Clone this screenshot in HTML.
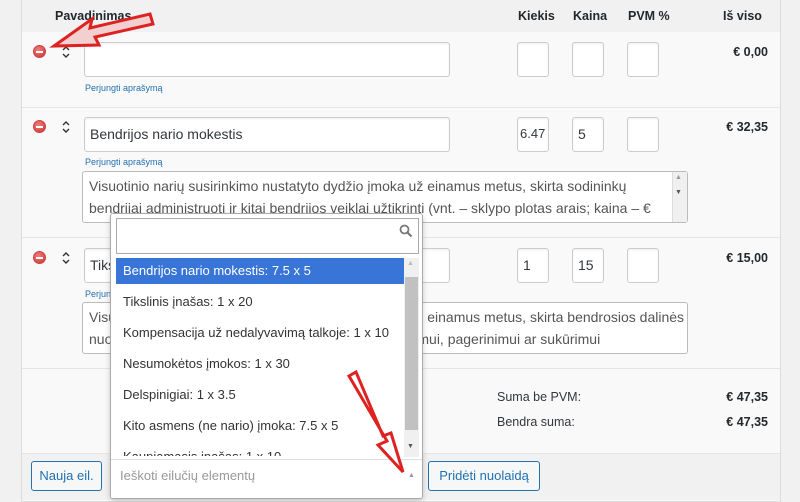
<!DOCTYPE html>
<html><head><meta charset="utf-8"><style>
*{box-sizing:border-box}
body{margin:0;width:800px;height:500px;overflow:hidden;background:#f1f1f1;font-family:"Liberation Sans",sans-serif;font-size:13px;color:#32373c;position:relative}
.a{position:absolute}
.panel{left:21px;top:-2px;width:760px;height:504px;background:#f9f9f9;border:1px solid #dcdcdc}
.hd{font-weight:bold;font-size:12.5px;color:#23282d}
.in{position:absolute;background:#fff;border:1px solid #ccc;border-radius:3px;box-shadow:inset 0 1px 2px rgba(0,0,0,.07);font-size:14px;padding:8px 5px;color:#32373c}
.lk{position:absolute;font-size:9px;color:#2271b1}
.tot{position:absolute;font-weight:bold;font-size:12.5px;right:32px;color:#23282d}
.min{position:absolute;width:13px;height:13px;border-radius:50%;background:radial-gradient(circle at 40% 35%,#f08080,#c9302c);border:1px solid #c44}
.min:after{content:"";position:absolute;left:2px;top:4.5px;width:7px;height:2px;background:#fff}
.ta{position:absolute;background:#fff;border:1px solid #bbb;border-radius:3px;font-size:14px;line-height:22px;padding:3px 6px;color:#555;white-space:nowrap;overflow:hidden}
.btn{position:absolute;border:1px solid #2271b1;border-radius:3px;background:#f6f7f7;color:#2271b1;font-size:13px;text-align:center;line-height:28px}
.dd{left:110px;top:213px;width:313px;height:286px;background:#fff;border:1px solid #aaa;border-radius:3px;box-shadow:0 2px 6px rgba(0,0,0,.2);overflow:hidden}
.it{position:absolute;left:5px;width:288px;height:26px;line-height:26px;padding-left:7px;font-size:13px;color:#333}
</style></head><body>
<div class="a panel"></div>
<div class="a" style="left:22px;top:0;width:758px;height:32px;background:#f1f1f1"></div>
<div class="a hd" style="left:55px;top:9px">Pavadinimas</div>
<div class="a hd" style="left:518px;top:9px">Kiekis</div>
<div class="a hd" style="left:573px;top:9px">Kaina</div>
<div class="a hd" style="left:628px;top:9px">PVM %</div>
<div class="a hd" style="left:723px;top:9px">Iš viso</div>

<svg class="a" style="left:0;top:0" width="80" height="300">
<g fill="none" stroke="#333" stroke-width="1.4">
<path d="M63,50 L66,47 L69,50 M63,54 L66,57 L69,54"/>
<path d="M63,125 L66,122 L69,125 M63,129 L66,132 L69,129"/>
<path d="M63,256 L66,253 L69,256 M63,260 L66,263 L69,260"/>
</g></svg>

<!-- row1 -->
<div class="min" style="left:33px;top:45px"></div>
<div class="in" style="left:84px;top:42px;width:366px;height:35px"></div>
<div class="lk" style="left:85px;top:83px">Perjungti aprašymą</div>
<div class="in" style="left:517px;top:42px;width:32px;height:35px"></div>
<div class="in" style="left:572px;top:42px;width:32px;height:35px"></div>
<div class="in" style="left:627px;top:42px;width:32px;height:35px"></div>
<div class="tot" style="top:45px">€ 0,00</div>
<div class="a" style="left:22px;top:107px;width:758px;height:1px;background:#e5e5e5"></div>

<!-- row2 -->
<div class="min" style="left:33px;top:120px"></div>
<div class="in" style="left:84px;top:117px;width:366px;height:35px">Bendrijos nario mokestis</div>
<div class="lk" style="left:85px;top:157px">Perjungti aprašymą</div>
<div class="in" style="left:517px;top:117px;width:32px;height:35px;font-size:13px;padding:8px 2px">6.47</div>
<div class="in" style="left:572px;top:117px;width:32px;height:35px">5</div>
<div class="in" style="left:627px;top:117px;width:32px;height:35px"></div>
<div class="tot" style="top:120px">€ 32,35</div>
<div class="ta" style="left:82px;top:171px;width:606px;height:52px">Visuotinio narių susirinkimo nustatyto dydžio įmoka už einamus metus, skirta sodininkų<br>bendrijai administruoti ir kitai bendrijos veiklai užtikrinti (vnt. – sklypo plotas arais; kaina – €</div>
<div class="a" style="left:672px;top:172px;width:15px;height:50px;background:#f0f0f0;border-left:1px solid #ddd"></div>
<div class="a" style="left:675px;top:174px;font-size:7px;color:#999">▲</div>
<div class="a" style="left:675px;top:189px;font-size:7px;color:#555">▼</div>
<div class="a" style="left:22px;top:237px;width:758px;height:1px;background:#e5e5e5"></div>

<!-- row3 -->
<div class="min" style="left:33px;top:251px"></div>
<div class="in" style="left:84px;top:248px;width:366px;height:35px">Tikslinis</div>
<div class="lk" style="left:85px;top:289px">Perjungti</div>
<div class="in" style="left:517px;top:248px;width:32px;height:35px">1</div>
<div class="in" style="left:572px;top:248px;width:32px;height:35px">15</div>
<div class="in" style="left:627px;top:248px;width:32px;height:35px"></div>
<div class="tot" style="top:251px">€ 15,00</div>
<div class="ta" style="left:82px;top:302px;width:606px;height:52px">Visuotinio narių susirinkimo nustatyto dydžio įmoka už einamus metus, skirta bendrosios dalinės<br>nuosavybės teise priklausančio turto įsigijimui, išlaikymui, pagerinimui ar sukūrimui</div>
<div class="a" style="left:22px;top:368px;width:758px;height:1px;background:#e5e5e5"></div>

<div class="a" style="left:497px;top:390px;font-size:12.5px">Suma be PVM:</div>
<div class="a" style="left:497px;top:415px;font-size:12.5px">Bendra suma:</div>
<div class="tot" style="top:390px">€ 47,35</div>
<div class="tot" style="top:415px">€ 47,35</div>

<div class="a" style="left:22px;top:453px;width:758px;height:47px;background:#f1f1f1;border-top:1px solid #e5e5e5"></div>
<div class="btn" style="left:31px;top:461px;width:71px;height:30px">Nauja eil.</div>
<div class="btn" style="left:428px;top:461px;width:112px;height:30px">Pridėti nuolaidą</div>

<!-- dropdown -->
<div class="a dd">
<div class="a" style="left:5px;top:4px;width:303px;height:36px;border:1px solid #aaa"></div>
<svg class="a" style="left:288px;top:10px" width="14" height="14"><circle cx="5.5" cy="5.5" r="4" fill="none" stroke="#777" stroke-width="1.8"/><line x1="8.5" y1="8.5" x2="12.5" y2="12.5" stroke="#777" stroke-width="2.2"/></svg>
<div class="it" style="top:44px;background:#3875d7;color:#fff">Bendrijos nario mokestis: 7.5 x 5</div>
<div class="it" style="top:75px">Tikslinis įnašas: 1 x 20</div>
<div class="it" style="top:106px">Kompensacija už nedalyvavimą talkoje: 1 x 10</div>
<div class="it" style="top:137px">Nesumokėtos įmokos: 1 x 30</div>
<div class="it" style="top:168px">Delspinigiai: 1 x 3.5</div>
<div class="it" style="top:199px">Kito asmens (ne nario) įmoka: 7.5 x 5</div>
<div class="it" style="top:230px;height:12px;overflow:hidden;line-height:26px">Kaupiamasis įnašas: 1 x 10</div>
<div class="a" style="left:293px;top:44px;width:15px;height:199px;background:#f0f0f0"></div>
<div class="a" style="left:294px;top:63px;width:13px;height:153px;background:#c1c1c1"></div>
<div class="a" style="left:296px;top:46px;font-size:7px;color:#bbb">▲</div>
<div class="a" style="left:296px;top:229px;font-size:7px;color:#555">▼</div>
<div class="a" style="left:0;top:245px;width:313px;height:42px;background:#fff;border-top:1px solid #ddd"></div>
<div class="a" style="left:9px;top:254px;color:#999;font-size:13px">Ieškoti eilučių elementų</div>
<div class="a" style="left:297px;top:258px;font-size:7px;color:#999">▲</div>
</div>

<!-- red arrows -->
<svg class="a" style="left:0;top:0" width="800" height="500">
<polygon points="54,46 92,19 90,28 150,14 153,24 95,37 99,45" fill="#f3d0d0" stroke="#d22" stroke-width="3"/>
<polygon points="349,376 356,372 383,436 391,433 403,472 378,445 387,441" fill="#fff" stroke="#d22" stroke-width="3"/>
</svg>
</body></html>
